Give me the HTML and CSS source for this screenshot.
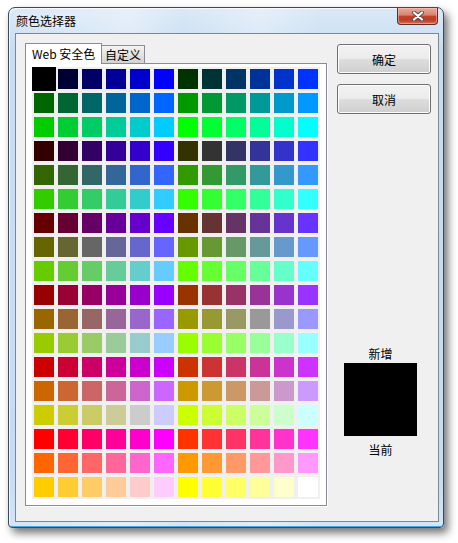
FILE: index.html
```html
<!DOCTYPE html>
<html lang="zh-CN">
<head>
<meta charset="utf-8">
<title>颜色选择器</title>
<link rel="stylesheet" href="styles.css">
</head>
<body>
<div class="window">
  <div class="titlebar">
    <span class="title">颜色选择器</span>
    <div class="close">
      <svg width="14" height="10" viewBox="0 0 14 10">
        <path d="M3 1.5 L11 8.5 M11 1.5 L3 8.5" stroke="#4a4f55" stroke-width="4" stroke-linecap="round"/>
        <path d="M3 1.5 L11 8.5 M11 1.5 L3 8.5" stroke="#ffffff" stroke-width="2.2" stroke-linecap="round"/>
      </svg>
    </div>
  </div>
  <div class="client">
    <div class="tabctl">
      <div class="tabs">
        <div class="tab active">Web 安全色</div>
        <div class="tab">自定义</div>
      </div>
      <div class="panel">
        <div class="grid" id="grid"></div>
      </div>
    </div>
    <div class="side">
      <button class="btn">确定</button>
      <button class="btn">取消</button>
      <div class="preview">
        <div class="plabel">新增</div>
        <div class="swatch"></div>
        <div class="plabel now">当前</div>
      </div>
    </div>
  </div>
</div>
<script src="script.js"></script>
</body>
</html>
```
FILE: styles.css
```css
html, body {
  margin: 0;
  padding: 0;
  background: #ffffff;
}
body {
  width: 458px;
  height: 543px;
  overflow: hidden;
  font-family: "Noto Sans CJK SC", "Noto Sans", sans-serif;
  font-size: 12px;
  color: #000;
}
.window {
  box-sizing: border-box;
  width: 436px;
  height: 521px;
  margin: 7px 0 0 8px;
  border: 1px solid #3d4a5a;
  border-radius: 7px 7px 4px 4px;
  padding: 0 4px 5px 6px;
  display: flex;
  flex-direction: column;
  background:
    linear-gradient(to right, rgba(255,255,255,0) 0%, rgba(255,255,255,0.35) 28%, rgba(255,255,255,0) 40%, rgba(255,255,255,0.3) 58%, rgba(255,255,255,0) 72%),
    linear-gradient(#dbe9f7, #c9ddf2 40px, #c6dcf2 90%, #d4e6f8);
  box-shadow: inset 1px 1px 0 rgba(255,255,255,0.7), inset 0 -1px 0 #4aa6dc, 4px 5px 9px rgba(0,0,0,0.55);
}
.titlebar {
  height: 25px;
  display: flex;
  align-items: center;
  padding: 0 1px 0 1px;
}
.title {
  line-height: 16px;
  color: #000;
  text-shadow: 0 0 6px rgba(255,255,255,0.9);
}
.close {
  margin-left: auto;
  align-self: flex-start;
  box-sizing: border-box;
  width: 41px;
  height: 17px;
  border: 1px solid #6a2a20;
  border-top: none;
  border-radius: 0 0 4px 4px;
  background: linear-gradient(#e9aa9c 0%, #d9826f 45%, #c3432b 50%, #bb3d27 75%, #d8705a 100%);
  box-shadow: inset 0 0 0 1px rgba(255,210,200,0.45);
  display: flex;
  align-items: center;
  justify-content: center;
}
.client {
  flex: 1;
  border: 1px solid #7c8794;
  background: #f0f0f0;
  display: flex;
  padding: 9px 0 0 9px;
}
.tabctl {
  width: 302px;
  display: flex;
  flex-direction: column;
}
.tabs {
  display: flex;
  align-items: flex-end;
  height: 20px;
  position: relative;
  z-index: 1;
}
.tab {
  box-sizing: border-box;
  height: 18px;
  padding: 0 3px;
  border: 1px solid #898c95;
  border-bottom: none;
  background: linear-gradient(#f3f3f3, #e3e3e3 50%, #d3d3d3);
  line-height: 17px;
  white-space: nowrap;
}
.tab + .tab {
  border-left: none;
}
.tab.active {
  height: 21px;
  width: 77px;
  padding: 0 6px;
  background: #fff;
  line-height: 19px;
  margin-bottom: -1px;
}
.panel {
  box-sizing: border-box;
  width: 302px;
  height: 443px;
  border: 1px solid #898c95;
  background: #fff;
  padding: 3px 6px 6px 6px;
  box-shadow: 1px 1px 0 #ffffff;
}
.grid {
  display: grid;
  grid-template-columns: repeat(12, 20px);
  grid-auto-rows: 20px;
  gap: 4px;
  padding: 2px;
  background: #f0f0f0;
  width: 284px;
}
.cell {
  width: 20px;
  height: 20px;
}
.cell.selected {
  outline: 2px solid #000;
}
.side {
  width: 94px;
  margin-left: 10px;
  padding-top: 1px;
  display: flex;
  flex-direction: column;
}
.btn {
  box-sizing: border-box;
  width: 94px;
  height: 30px;
  margin: 0 0 10px 0;
  padding: 0;
  border: 1px solid #707070;
  border-radius: 3px;
  background: linear-gradient(#f2f2f2 0%, #ebebeb 50%, #dddddd 50%, #cfcfcf 100%);
  box-shadow: inset 0 0 0 1px #fcfcfc;
  font-family: "Noto Sans CJK SC", "Noto Sans", sans-serif;
  font-size: 12px;
  color: #000;
}
.preview {
  margin-top: 222px;
  margin-left: 7px;
  width: 73px;
  display: flex;
  flex-direction: column;
  align-items: center;
}
.plabel {
  line-height: 16px;
  height: 16px;
}
.swatch {
  width: 73px;
  height: 73px;
  background: #000;
  margin-top: 1px;
}
.plabel.now {
  margin-top: 6px;
}
```
FILE: script.js
```js
var grid = document.getElementById('grid');
var v = ['00', '33', '66', '99', 'CC', 'FF'];
for (var i = 0; i < 216; i++) {
  var r = Math.floor(i / 36), g = Math.floor(i / 6) % 6, b = i % 6;
  var d = document.createElement('div');
  d.className = 'cell' + (i === 0 ? ' selected' : '');
  d.style.background = '#' + v[r] + v[g] + v[b];
  grid.appendChild(d);
}
```
